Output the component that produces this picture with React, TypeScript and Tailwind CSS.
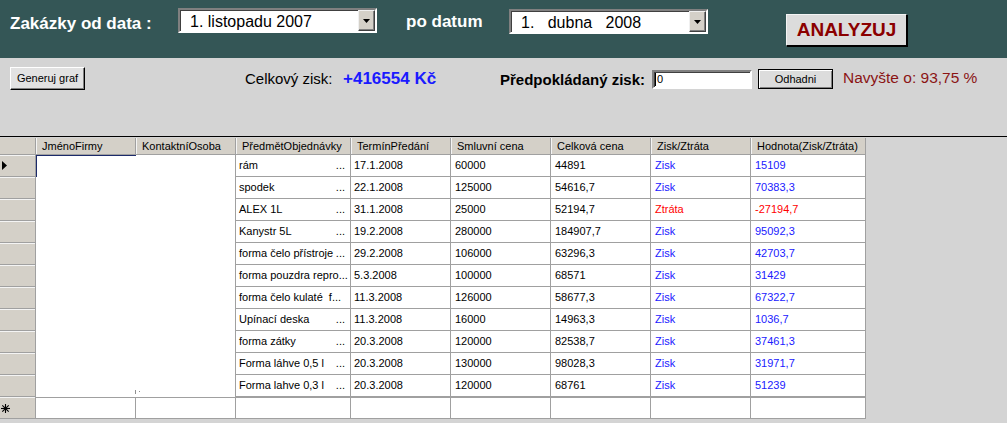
import React from "react";

type Row = {
  item: string;
  dots: boolean;
  date: string;
  contract: string;
  total: string;
  loss: boolean;
  value: string;
};

const rows: Row[] = [
  { item: "rám", dots: true, date: "17.1.2008", contract: "60000", total: "44891", loss: false, value: "15109" },
  { item: "spodek", dots: true, date: "22.1.2008", contract: "125000", total: "54616,7", loss: false, value: "70383,3" },
  { item: "ALEX 1L", dots: true, date: "31.1.2008", contract: "25000", total: "52194,7", loss: true, value: "-27194,7" },
  { item: "Kanystr 5L", dots: true, date: "19.2.2008", contract: "280000", total: "184907,7", loss: false, value: "95092,3" },
  { item: "forma čelo přístroje", dots: true, date: "29.2.2008", contract: "106000", total: "63296,3", loss: false, value: "42703,7" },
  { item: "forma pouzdra repro...", dots: false, date: "5.3.2008", contract: "100000", total: "68571", loss: false, value: "31429" },
  { item: "forma čelo kulaté  f...", dots: false, date: "11.3.2008", contract: "126000", total: "58677,3", loss: false, value: "67322,7" },
  { item: "Upínací deska", dots: true, date: "11.3.2008", contract: "16000", total: "14963,3", loss: false, value: "1036,7" },
  { item: "forma zátky", dots: true, date: "20.3.2008", contract: "120000", total: "82538,7", loss: false, value: "37461,3" },
  { item: "Forma láhve 0,5 l", dots: true, date: "20.3.2008", contract: "130000", total: "98028,3", loss: false, value: "31971,7" },
  { item: "Forma lahve 0,3 l", dots: true, date: "20.3.2008", contract: "120000", total: "68761", loss: false, value: "51239" },
];

const headers: { label: string; w: string }[] = [
  { label: "JménoFirmy", w: "w-[100px]" },
  { label: "KontaktníOsoba", w: "w-[100px]" },
  { label: "PředmětObjednávky", w: "w-[115px]" },
  { label: "TermínPředání", w: "w-[100px]" },
  { label: "Smluvní cena", w: "w-[100px]" },
  { label: "Celková cena", w: "w-[100px]" },
  { label: "Zisk/Ztráta", w: "w-[100px]" },
  { label: "Hodnota(Zisk/Ztráta)", w: "w-[115px]" },
];

function Dropdown({ text, top }: { text: string; top: string }) {
  return (
    <div
      className={`${top} w-[199px] h-[25px] flex bg-white border-2 border-t-[#808080] border-l-[#808080] border-b-white border-r-white shadow-[inset_1px_1px_0_#404040]`}
    >
      <div className="flex-1 pl-[10px] pt-[1px] text-[16px] leading-[21px] whitespace-pre text-black">{text}</div>
      <div className="w-[17px] h-[21px] bg-[#d4d0c8] border border-t-[#f0f0f0] border-l-[#f0f0f0] border-r-[#404040] border-b-[#404040] shadow-[inset_-1px_-1px_0_#808080] flex items-center justify-center">
        <svg width="7" height="4" viewBox="0 0 7 4">
          <polygon points="0,0 7,0 3.5,4" fill="#000" />
        </svg>
      </div>
    </div>
  );
}

function RowHeader({ kind }: { kind: "arrow" | "none" | "star" }) {
  return (
    <div className="w-[36px] h-full bg-[#d4d0c8] border-r border-b border-[#a0a0a0] shadow-[inset_0_1px_0_#f4f4f4] flex items-center pl-[2px]">
      {kind === "arrow" && (
        <svg width="6" height="9" viewBox="0 0 6 9">
          <polygon points="0,0 5,4.5 0,9" fill="#000" />
        </svg>
      )}
      {kind === "star" && (
        <svg width="9" height="9" viewBox="0 0 9 9" className="ml-[-1px] mt-[1px]">
          <g stroke="#000" strokeWidth="1.1">
            <line x1="4.5" y1="0" x2="4.5" y2="9" />
            <line x1="0" y1="4.5" x2="9" y2="4.5" />
            <line x1="1.3" y1="1.3" x2="7.7" y2="7.7" />
            <line x1="7.7" y1="1.3" x2="1.3" y2="7.7" />
          </g>
        </svg>
      )}
    </div>
  );
}

export default function App() {
  return (
    <div className="w-[1007px] h-[423px] overflow-hidden bg-[#d4d4d4] font-['Liberation_Sans',Arial,sans-serif] text-black">
      {/* top bar */}
      <div className="h-[58px] bg-[#345656] flex items-start">
        <div className="w-[178px] pl-[10px] pt-[14px] text-[17px] leading-[20px] font-bold text-white whitespace-nowrap">
          Zakázky od data :
        </div>
        <Dropdown text="1. listopadu 2007" top="mt-[8px]" />
        <div className="ml-[29px] w-[103px] pt-[12px] text-[17px] leading-[20px] font-bold text-white whitespace-nowrap">
          po datum
        </div>
        <Dropdown text="1.   dubna   2008" top="mt-[9px]" />
        <button className="ml-[78px] mt-[14px] w-[121px] h-[32px] bg-[#dcdcdc] border border-t-[#f4f4f4] border-l-[#f4f4f4] border-r-black border-b-black shadow-[1px_1px_0_#000] text-[19px] leading-[30px] font-bold text-[#8b0000] text-center">
          ANALYZUJ
        </button>
      </div>

      {/* second row */}
      <div className="h-[78px] flex items-start">
        <div className="w-[85px] pl-[10px] pt-[7px]">
          <button className="w-[75px] h-[23px] bg-[#e2e2e2] border border-t-white border-l-white border-r-black border-b-black shadow-[inset_-1px_-1px_0_#808080] text-[11px] leading-[20px] text-black text-center">
            Generuj graf
          </button>
        </div>
        <div className="ml-[160px] w-[255px] pt-[12px] flex items-baseline whitespace-nowrap">
          <span className="w-[98px] text-[15px] leading-[18px] text-black">Celkový zisk:</span>
          <span className="text-[17px] leading-[18px] font-bold text-[#1a1aff]">+416554 Kč</span>
        </div>
        <div className="w-[152px] pt-[13px] text-[15px] leading-[18px] font-bold text-black whitespace-nowrap">
          Předpokládaný zisk:
        </div>
        <div className="mt-[12px] w-[100px] h-[19px] bg-white border-2 border-t-[#808080] border-l-[#808080] border-b-white border-r-white shadow-[inset_1px_1px_0_#404040] flex items-center pl-[1px]">
          <div className="w-[1px] h-[13px] bg-black" />
          <span className="ml-[1px] text-[11px] leading-[15px]">0</span>
        </div>
        <button className="ml-[6px] mt-[11px] w-[75px] h-[20px] bg-[#dcdcdc] border border-black shadow-[inset_1px_1px_0_#fff,inset_-1px_-1px_0_#808080] text-[11px] leading-[18px] text-black text-center">
          Odhadni
        </button>
        <div className="ml-[10px] pt-[11px] text-[15.5px] leading-[18px] text-[#8b1414] whitespace-nowrap">
          Navyšte o: 93,75 %
        </div>
      </div>

      {/* grid */}
      <div className="border-t border-black pt-[1px]">
        <div className="w-[866px] text-[11px]">
          {/* header */}
          <div className="flex h-[17px]">
            <div className="w-[36px] h-full bg-[#d4d0c8] border-r border-b border-[#a0a0a0]" />
            {headers.map((h) => (
              <div
                key={h.label}
                className={`${h.w} h-full bg-[#d4d0c8] border-r border-b border-[#a0a0a0] shadow-[inset_1px_0_0_#f4f4f4] pl-[6px] leading-[16px] whitespace-nowrap overflow-hidden`}
              >
                {h.label}
              </div>
            ))}
          </div>

          {/* data rows */}
          {rows.map((r, i) => (
            <div key={i} className="flex h-[22px]">
              <RowHeader kind={i === 0 ? "arrow" : "none"} />
              <div
                className={`w-[100px] h-full bg-white ${i === 0 ? "shadow-[inset_1px_1px_0_#1c2a6a]" : ""}`}
              />
              <div className="relative w-[100px] h-full bg-white border-r border-[#a0a0a0]">
                {i === rows.length - 1 && (
                  <>
                    <div className="absolute left-[-1px] top-[15px] w-[1px] h-[4px] bg-[#909090]" />
                    <div className="absolute left-[3px] top-[16px] w-[1px] h-[1px] bg-[#909090]" />
                  </>
                )}
              </div>
              <div className="w-[115px] h-full bg-white border-r border-b border-[#a0a0a0] flex items-center justify-between pl-[3px] pr-[5px] whitespace-pre overflow-hidden">
                <span>{r.item}</span>
                {r.dots && <span>...</span>}
              </div>
              <div className="w-[100px] h-full bg-white border-r border-b border-[#a0a0a0] flex items-center pl-[3px]">{r.date}</div>
              <div className="w-[100px] h-full bg-white border-r border-b border-[#a0a0a0] flex items-center pl-[4px]">{r.contract}</div>
              <div className="w-[100px] h-full bg-white border-r border-b border-[#a0a0a0] flex items-center pl-[4px]">{r.total}</div>
              <div
                className={`w-[100px] h-full bg-white border-r border-b border-[#a0a0a0] flex items-center pl-[4px] ${r.loss ? "text-[#ff0000]" : "text-[#2020ff]"}`}
              >
                {r.loss ? "Ztráta" : "Zisk"}
              </div>
              <div
                className={`w-[115px] h-full bg-white border-r border-b border-[#a0a0a0] flex items-center pl-[4px] ${r.loss ? "text-[#ff0000]" : "text-[#2020ff]"}`}
              >
                {r.value}
              </div>
            </div>
          ))}

          {/* new row */}
          <div className="flex h-[22px]">
            <RowHeader kind="star" />
            {headers.map((h) => (
              <div
                key={h.label}
                className={`${h.w} h-full bg-white border-r border-b border-t border-[#a0a0a0]`}
              />
            ))}
          </div>
        </div>
      </div>
    </div>
  );
}
